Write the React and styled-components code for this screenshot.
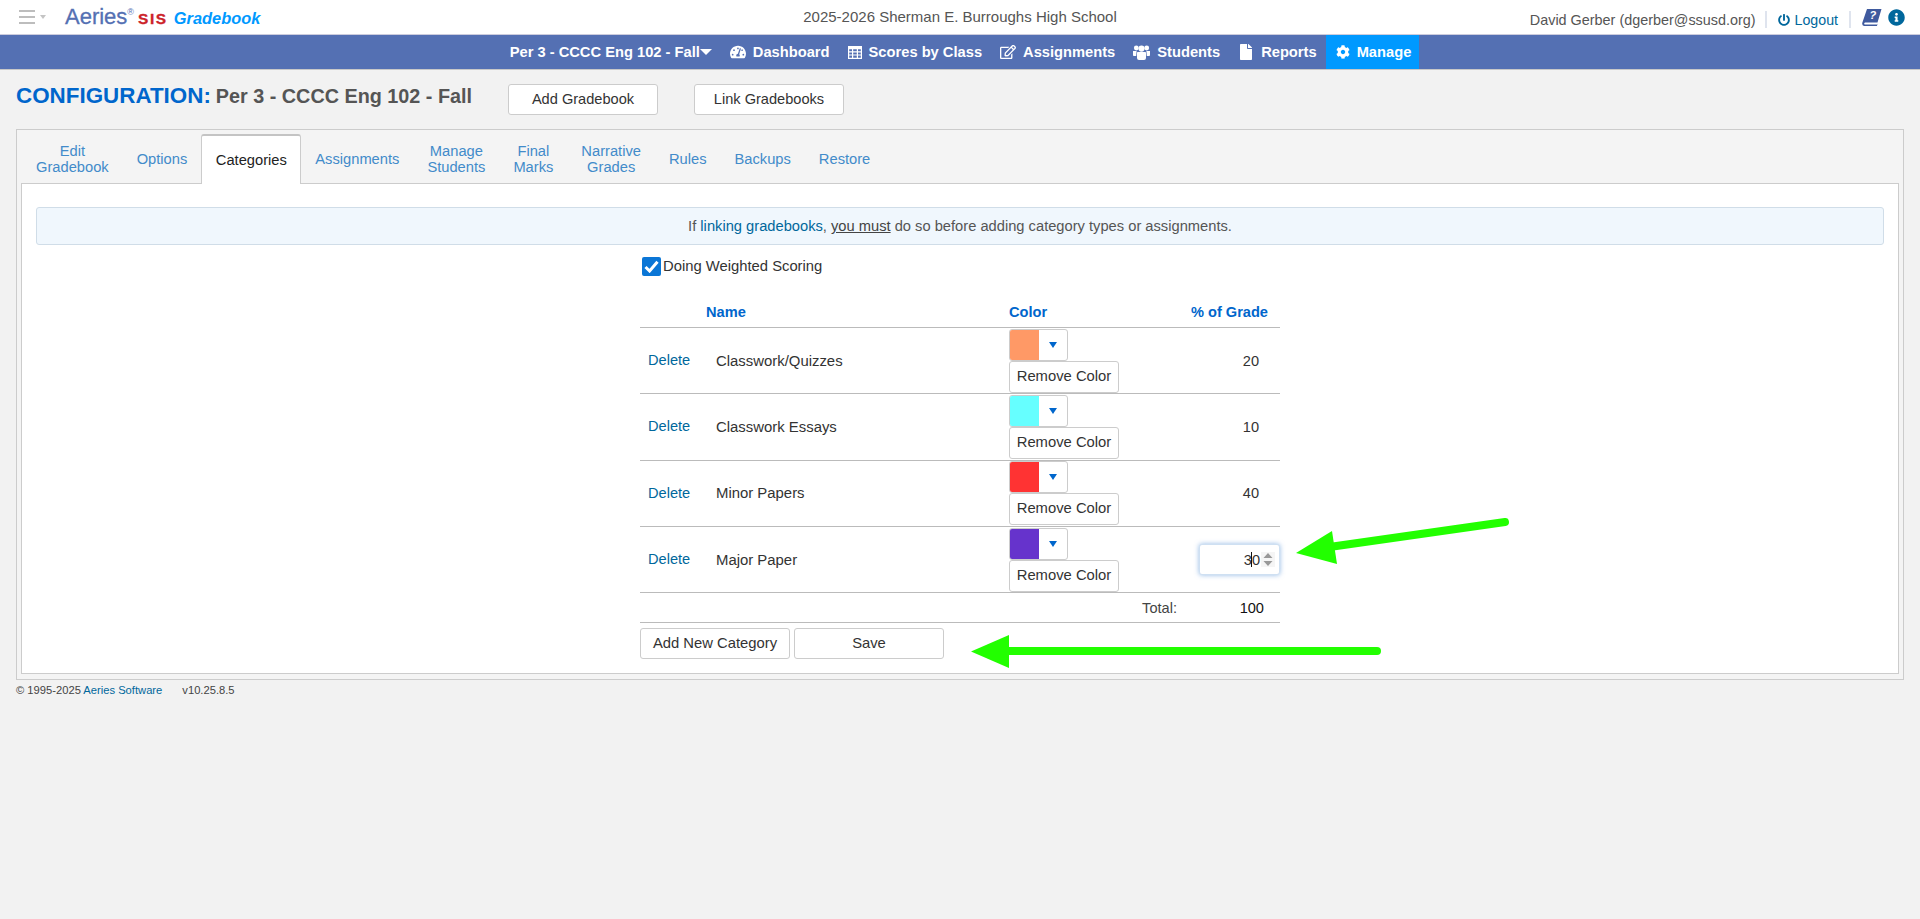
import React from 'react'
import styled, { createGlobalStyle } from 'styled-components'
import { FaTachometerAlt, FaRegEdit, FaFile, FaCog, FaPowerOff, FaInfoCircle } from 'react-icons/fa'

const GlobalStyle = createGlobalStyle`
html, body {
  margin: 0;
  padding: 0;
  background: #f2f2f2;
  font-family: "Liberation Sans", Arial, sans-serif;
  font-size: 15px;
  color: #444;
}
* { box-sizing: border-box; }
`

const Page = styled.div`
position: relative;
width: 1920px;
height: 919px;
overflow: hidden;
`

const TopBar = styled.header`
display: grid;
grid-template-columns: 1fr auto 1fr;
align-items: center;
height: 35px;
background: #fff;
border-bottom: 1px solid #ccd;
`
const BrandSide = styled.div`
display: flex;
align-items: center;
padding-left: 19px;
`
const Burger = styled.div`
display: flex;
flex-direction: column;
gap: 4px;
width: 16px;
margin-top: -1px;
span {
  display: block;
  height: 2px;
  background: #bdbdbd;
}
`
const BurgerCaret = styled.div`
width: 0;
height: 0;
margin-left: 5px;
border-left: 3.5px solid transparent;
border-right: 3.5px solid transparent;
border-top: 4px solid #c4c4c4;
`
const Logo = styled.div`
display: flex;
align-items: baseline;
margin-left: 19px;
margin-top: -1px;
`
const LogoAeries = styled.span`
font-size: 22px;
color: #5470b3;
font-weight: 400;
-webkit-text-stroke: 0.3px #5470b3;
sup {
  font-size: 9px;
  vertical-align: 9px;
  line-height: 0;
  -webkit-text-stroke: 0;
}
`
const LogoSis = styled.span`
font-size: 15.5px;
font-weight: 700;
color: #cc2229;
letter-spacing: 1.6px;
-webkit-text-stroke: 0.3px #cc2229;
margin-left: 4px;
`
const LogoGradebook = styled.span`
font-size: 16.4px;
font-weight: 700;
font-style: italic;
color: #0099ff;
margin-left: 6px;
`
const SchoolName = styled.div`
color: #555;
font-size: 15px;
margin-top: -1px;
`
const UserSide = styled.div`
display: flex;
align-items: center;
justify-content: flex-end;
padding-right: 15px;
`
const UserName = styled.span`
color: #555;
font-size: 14.4px;
margin-top: 5px;
margin-right: -2px;
`
const Separator = styled.span`
width: 2px;
height: 17px;
margin: 4px 11px 0;
background: #dfe4ee;
`
const LogoutLink = styled.a`
display: flex;
align-items: center;
gap: 5px;
color: #00679c;
font-size: 14.2px;
margin-top: 5px;
`
const HelpIcons = styled.div`
display: flex;
align-items: center;
gap: 6px;
color: #00679c;
`

const NavBar = styled.nav`
display: flex;
justify-content: center;
height: 35px;
background: #5470b3;
border-bottom: 1px solid #c8c8c8;
`
const NavItem = styled.a`
display: flex;
align-items: center;
gap: 7px;
height: 34px;
padding: 0 ${p => (p.$active ? '8px' : '9px')} 0 ${p => (p.$active ? '10px' : '9px')};
color: #fff;
font-weight: 700;
font-size: 14.7px;
background: ${p => (p.$active ? '#0099ff' : 'transparent')};
white-space: nowrap;
`
const NavCaret = styled.span`
width: 0;
height: 0;
margin-left: -7px;
border-left: 6px solid transparent;
border-right: 6px solid transparent;
border-top: 6px solid #fff;
`

const TitleRow = styled.div`
display: flex;
align-items: flex-start;
height: 59px;
padding: 13px 0 0 16px;
`
const Title = styled.h1`
margin: 0;
width: 492px;
font-size: 19.8px;
line-height: 26px;
font-weight: 700;
color: #555;
white-space: nowrap;
span {
  color: #0066cc;
  font-size: 22.4px;
  margin-right: 5px;
}
`
const TitleButton = styled.button`
width: 150px;
height: 31px;
margin-top: 1px;
margin-right: 36px;
padding: 0 0 2px;
background: #fff;
border: 1px solid #ccc;
border-radius: 3px;
font: inherit;
font-size: 14.6px;
color: #333;
`

const Panel = styled.section`
width: 1888px;
height: 551px;
margin-left: 16px;
padding: 4px;
background: #f4f4f4;
border: 1px solid #ccc;
`
const TabRow = styled.div`
display: flex;
align-items: stretch;
height: 50px;
padding-left: 1px;
`
const Tab = styled.a`
display: flex;
align-items: center;
justify-content: center;
height: ${p => (p.$active ? '50px' : '49px')};
padding: 0 14px;
text-align: center;
line-height: 16px;
font-size: 14.7px;
color: ${p => (p.$active ? '#222' : '#428bca')};
${p => p.$active && `
  width: 100px;
  padding: 0;
  background: #fff;
  border: 1px solid #ccc;
  border-top: 2px solid #c4c4c4;
  border-bottom: none;
  border-radius: 3px 3px 0 0;
  position: relative;
  z-index: 1;
`}
`
const TabBody = styled.div`
height: 491px;
margin-top: -1px;
padding: 23px 14px 0;
background: #fff;
border: 1px solid #ccc;
`
const Notice = styled.div`
display: flex;
align-items: center;
justify-content: center;
height: 38px;
background: #f0f7fd;
border: 1px solid #d0dde8;
border-radius: 3px;
font-size: 14.7px;
color: #555;
a { color: #00679c; }
u { color: #444; }
`
const Center = styled.div`
width: 640px;
margin: 0 0 0 604px;
`
const CheckRow = styled.label`
display: flex;
align-items: center;
gap: 2px;
height: 20px;
margin: 11px 0 0 2px;
font-size: 14.8px;
color: #333;
`
const CheckBox = styled.span`
display: flex;
align-items: center;
justify-content: center;
width: 19px;
height: 19px;
background: #0b76d6;
border-radius: 2px;
`
const Row = styled.div`
display: grid;
grid-template-columns: 66px 303px 1fr;
align-items: center;
height: ${p => p.$height || '66.33px'};
border-bottom: 1px solid #bbb;
`
const HeadRow = styled(Row)`
padding-top: 20px;
`
const HeadCell = styled.div`
color: #0066cc;
font-weight: 700;
font-size: 14.6px;
text-align: ${p => (p.$right ? 'right' : 'left')};
padding-right: ${p => (p.$right ? '12px' : '0')};
`
const DeleteLink = styled.a`
padding-left: 8px;
color: #00679c;
font-size: 14.6px;
margin-top: -1px;
`
const NameCell = styled.div`
padding-left: 10px;
color: #333;
font-size: 14.9px;
`
const ColorAndPercent = styled.div`
display: flex;
align-items: center;
justify-content: space-between;
height: 100%;
`
const ColorStack = styled.div`
display: flex;
flex-direction: column;
`
const ColorPicker = styled.div`
display: flex;
width: 59px;
height: 32px;
background: #fff;
border: 1px solid #ccc;
border-radius: 3px;
overflow: hidden;
`
const Swatch = styled.span`
width: 29px;
background: ${p => p.$color};
`
const PickerArrow = styled.span`
flex: 1;
display: flex;
align-items: center;
justify-content: center;
&::after {
  content: "";
  border-left: 4px solid transparent;
  border-right: 4px solid transparent;
  border-top: 6px solid #0066cc;
}
`
const RemoveButton = styled.button`
width: 110px;
height: 32px;
padding: 0 0 2px;
background: #fff;
border: 1px solid #ccc;
border-radius: 3px;
font: inherit;
font-size: 14.8px;
color: #333;
`
const Percent = styled.span`
padding-right: 21px;
color: #333;
font-size: 14.6px;
`
const NumberInput = styled.div`
position: relative;
display: flex;
align-items: center;
justify-content: flex-end;
gap: 1px;
width: 81px;
height: 31px;
padding-right: 4px;
background: #fff;
border: 1px solid #cfe0f2;
border-radius: 3px;
box-shadow: 0 0 5px rgba(60, 130, 210, 0.55);
font-size: 14.6px;
color: #333;
`
const Caret = styled.span`
position: absolute;
left: 51px;
top: 7px;
width: 1px;
height: 15px;
background: #111;
`
const TotalCell = styled.div`
display: flex;
justify-content: flex-end;
align-items: center;
height: 100%;
grid-column: 3;
font-size: 14.6px;
color: #444;
strong {
  width: 103px;
  padding-right: 16px;
  text-align: right;
  font-weight: 400;
  color: #111;
}
`
const Actions = styled.div`
display: flex;
gap: 4px;
margin-top: 5px;
`
const ActionButton = styled.button`
width: 150px;
height: 31px;
padding: 0 0 2px;
background: #fff;
border: 1px solid #ccc;
border-radius: 3px;
font: inherit;
font-size: 14.8px;
color: #333;
`
const Footer = styled.footer`
display: flex;
gap: 20px;
margin: 4px 0 0 16px;
font-size: 11.2px;
color: #444;
a { color: #00679c; }
`
const ArrowLayer = styled.svg`
position: absolute;
left: 0;
top: 0;
pointer-events: none;
`

const categories = [
  { name: 'Classwork/Quizzes', color: '#ff9966', percent: 20 },
  { name: 'Classwork Essays', color: '#66ffff', percent: 10 },
  { name: 'Minor Papers', color: '#ff3333', percent: 40 },
  { name: 'Major Paper', color: '#6633cc', percent: 30, editing: true },
]

const tabs = [
  ['Edit', 'Gradebook'], ['Options'], ['Categories'], ['Assignments'], ['Manage', 'Students'],
  ['Final', 'Marks'], ['Narrative', 'Grades'], ['Rules'], ['Backups'], ['Restore'],
]

function HelpBook() {
  return (
    <svg width="20" height="19" viewBox="0 0 20 19">
      <path d="M5 1 H19.5 L15.5 14.5 H3 Q1.6 15.2 2.6 16.4 H15 L15.6 15.4 L15 18 H2 Q-0.4 17 0.4 14.5 Z" fill="#3f5a9e" />
      <text x="7.5" y="11" fontSize="11" fontWeight="700" fontStyle="italic" fill="#fff" fontFamily="Liberation Sans">?</text>
    </svg>
  )
}

function TableIcon() {
  return (
    <svg width="14" height="13" viewBox="0 0 14 13">
      <path d="M0 0 H14 V13 H0 Z M1.2 3.2 V5.2 H4 V3.2 Z M5.2 3.2 V5.2 H8.8 V3.2 Z M10 3.2 V5.2 H12.8 V3.2 Z M1.2 6.4 V8.4 H4 V6.4 Z M5.2 6.4 V8.4 H8.8 V6.4 Z M10 6.4 V8.4 H12.8 V6.4 Z M1.2 9.6 V11.8 H4 V9.6 Z M5.2 9.6 V11.8 H8.8 V9.6 Z M10 9.6 V11.8 H12.8 V9.6 Z" fill="#fff" fillRule="evenodd" />
    </svg>
  )
}

function StudentsIcon() {
  return (
    <svg width="17" height="15" viewBox="0 0 17 15">
      <circle cx="3.3" cy="3" r="2.4" fill="#fff" />
      <circle cx="13.7" cy="3" r="2.4" fill="#fff" />
      <circle cx="8.5" cy="3.6" r="3.1" fill="#fff" />
      <path d="M0 6 H3.6 L3.2 11 H0.8 Q0 11 0 10 Z M17 6 H13.4 L13.8 11 H16.2 Q17 11 17 10 Z M4.6 7 H12.4 Q13 7 13 8.2 V13 Q13 15 11 15 H6 Q4 15 4 13 V8.2 Q4 7 4.6 7 Z" fill="#fff" />
    </svg>
  )
}

export default function App() {
  return (
    <Page>
      <GlobalStyle />
      <TopBar>
        <BrandSide>
          <Burger><span /><span /><span /></Burger>
          <BurgerCaret />
          <Logo>
            <LogoAeries>Aeries<sup>®</sup></LogoAeries>
            <LogoSis>SIS</LogoSis>
            <LogoGradebook>Gradebook</LogoGradebook>
          </Logo>
        </BrandSide>
        <SchoolName>2025-2026 Sherman E. Burroughs High School</SchoolName>
        <UserSide>
          <UserName>David Gerber (dgerber@ssusd.org)</UserName>
          <Separator />
          <LogoutLink><FaPowerOff size={12} />Logout</LogoutLink>
          <Separator />
          <HelpIcons>
            <HelpBook />
            <FaInfoCircle size={17} />
          </HelpIcons>
        </UserSide>
      </TopBar>

      <NavBar>
        <NavItem>Per 3 - CCCC Eng 102 - Fall<NavCaret /></NavItem>
        <NavItem><FaTachometerAlt size={16} />Dashboard</NavItem>
        <NavItem><TableIcon />Scores by Class</NavItem>
        <NavItem><FaRegEdit size={16} />Assignments</NavItem>
        <NavItem><StudentsIcon />Students</NavItem>
        <NavItem><FaFile size={16} />Reports</NavItem>
        <NavItem $active><FaCog size={14} />Manage</NavItem>
      </NavBar>

      <TitleRow>
        <Title><span>CONFIGURATION:</span>Per 3 - CCCC Eng 102 - Fall</Title>
        <TitleButton>Add Gradebook</TitleButton>
        <TitleButton>Link Gradebooks</TitleButton>
      </TitleRow>

      <Panel>
        <TabRow>
          {tabs.map(lines => (
            <Tab key={lines[0]} $active={lines[0] === 'Categories'}>
              <span>{lines[0]}{lines[1] && <br />}{lines[1]}</span>
            </Tab>
          ))}
        </TabRow>
        <TabBody>
          <Notice>
            <span>If <a>linking gradebooks</a>, <u>you must</u> do so before adding category types or assignments.</span>
          </Notice>
          <Center>
            <CheckRow>
              <CheckBox>
                <svg width="15" height="13" viewBox="0 0 15 13"><path d="M1.5 7 L5.6 11 L13.5 1.8" fill="none" stroke="#fff" strokeWidth="3" /></svg>
              </CheckBox>
              Doing Weighted Scoring
            </CheckRow>
            <HeadRow $height="52px">
              <span />
              <HeadCell>Name</HeadCell>
              <ColorAndPercent>
                <HeadCell>Color</HeadCell>
                <HeadCell $right>% of Grade</HeadCell>
              </ColorAndPercent>
            </HeadRow>
            {categories.map(cat => (
              <Row key={cat.name}>
                <DeleteLink>Delete</DeleteLink>
                <NameCell>{cat.name}</NameCell>
                <ColorAndPercent>
                  <ColorStack>
                    <ColorPicker><Swatch $color={cat.color} /><PickerArrow /></ColorPicker>
                    <RemoveButton>Remove Color</RemoveButton>
                  </ColorStack>
                  {cat.editing ? (
                    <NumberInput>
                      {cat.percent}
                      <Caret />
                      <svg width="14" height="15" viewBox="0 0 14 15">
                        <rect width="14" height="15" fill="#f5f5f5" />
                        <path d="M7 1 L11.5 6 H2.5 Z M2.5 9 H11.5 L7 14 Z" fill="#999" />
                      </svg>
                    </NumberInput>
                  ) : (
                    <Percent>{cat.percent}</Percent>
                  )}
                </ColorAndPercent>
              </Row>
            ))}
            <Row $height="30px">
              <TotalCell>Total:<strong>100</strong></TotalCell>
            </Row>
            <Actions>
              <ActionButton>Add New Category</ActionButton>
              <ActionButton>Save</ActionButton>
            </Actions>
          </Center>
        </TabBody>
      </Panel>

      <Footer>
        <span>© 1995-2025 <a>Aeries Software</a></span>
        <span>v10.25.8.5</span>
      </Footer>

      <ArrowLayer width="1920" height="919" viewBox="0 0 1920 919">
        <path d="M1333 546.5 L1505 522" stroke="#22ff00" strokeWidth="8" strokeLinecap="round" fill="none" />
        <path d="M1296 553 L1332 531 L1337 564 Z" fill="#22ff00" />
        <path d="M1005 651 L1377 651" stroke="#22ff00" strokeWidth="8" strokeLinecap="round" fill="none" />
        <path d="M971 651.5 L1009 635 L1009 668 Z" fill="#22ff00" />
      </ArrowLayer>
    </Page>
  )
}
